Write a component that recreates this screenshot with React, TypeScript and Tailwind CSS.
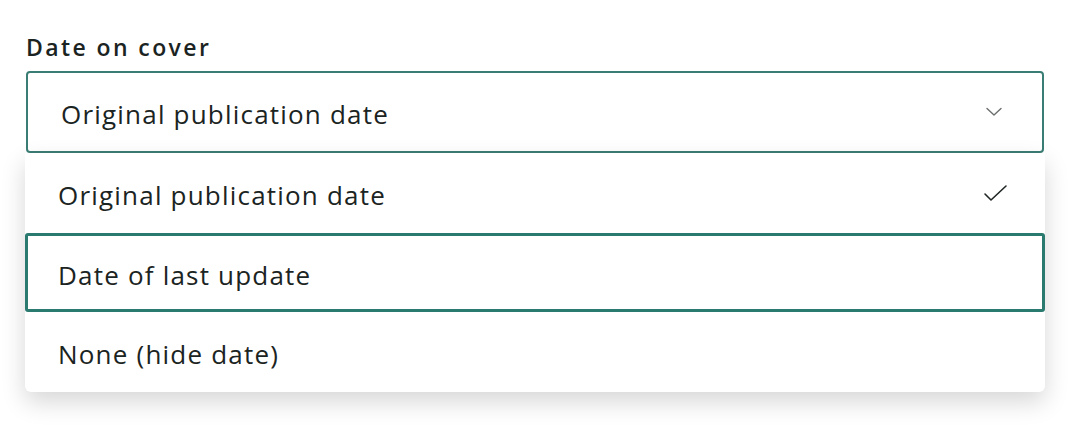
import React from "react";

const options = ["Original publication date", "Date of last update", "None (hide date)"];

function Chevron() {
	return (
		<svg width="16" height="10" viewBox="0 0 16 10" fill="none">
			<path d="M1 1.5 L8 8 L15 1.5" stroke="#6b6f6e" strokeWidth="1.4" strokeLinecap="round" strokeLinejoin="round" />
		</svg>
	);
}

function Check() {
	return (
		<svg width="26" height="18" viewBox="0 0 26 18" fill="none">
			<path d="M2 10 L8 16 L23 2" stroke="#1f2624" strokeWidth="1.6" strokeLinecap="round" strokeLinejoin="round" />
		</svg>
	);
}

export default function App() {
	const selected = 0;
	const active = 1;
	return (
		<div className="w-[1068px] h-[430px] bg-white pl-[25px] pr-[23px] pt-[32px] text-[#1b2422]" style={{ fontFamily: "'Open Sans', 'Noto Sans', sans-serif" }}>
			<label className="block pl-[1px] text-[23px] leading-[30px] font-semibold tracking-[2.4px]">Date on cover</label>
			<div className="mt-[9px] mx-[1px] h-[82px] flex items-center justify-between border-2 border-[#3a7d74] rounded-[4px] pl-[33px] pr-[40px]">
				<span className="pt-[4px] text-[26px] tracking-[1.2px]">Original publication date</span>
				<Chevron />
			</div>
			<ul className="bg-white rounded-b-[6px] shadow-[0_10px_24px_rgba(0,0,0,0.16)]">
				{options.map((o, i) => (
					<li
						key={o}
						className={
							i === active
								? "h-[79px] flex items-center justify-between border-[3px] border-[#2b7a6f] rounded-[3px] pl-[30px] pr-[33px]"
								: "h-[80px] flex items-center justify-between pl-[33px] pr-[36px]"
						}
					>
						<span className="pt-[5px] text-[26px] tracking-[1.2px]">{o}</span>
						{i === selected && <Check />}
					</li>
				))}
			</ul>
		</div>
	);
}
